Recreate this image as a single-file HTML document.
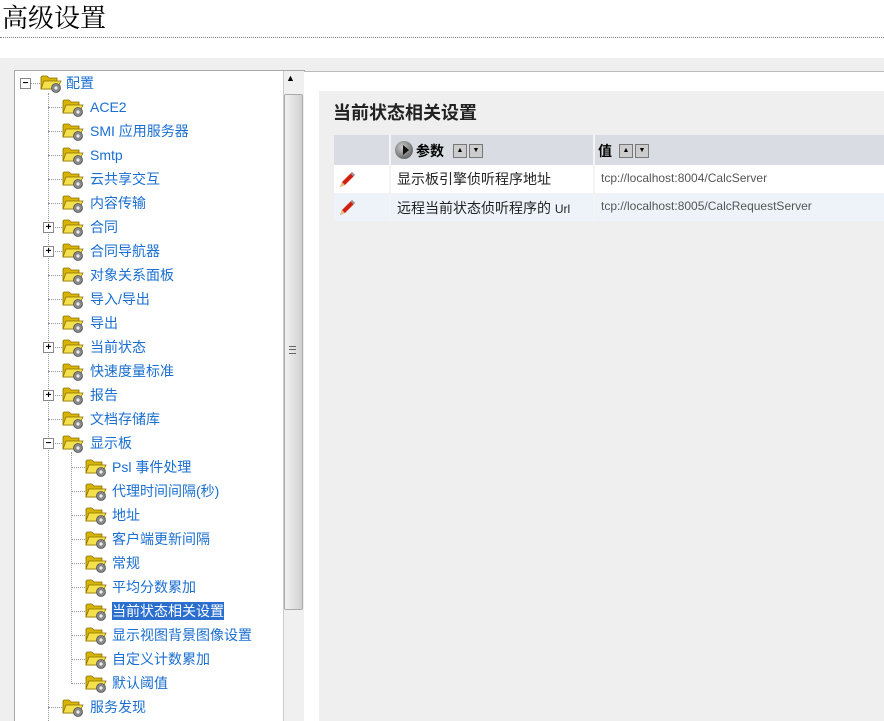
<!DOCTYPE html>
<html style="overflow:hidden;height:721px"><head><meta charset="utf-8"><style>
body{margin:0;width:884px;height:721px;overflow:hidden;background:#fff;font-family:"Liberation Sans","Noto Sans CJK SC",sans-serif;position:relative}
.a{position:absolute}
.t{position:absolute;font-size:14px;color:#1a6fd0;line-height:18px;white-space:nowrap}
.sel{background:#2a6fd0;color:#fff}
.hl{position:absolute;border-top:1px dotted #999;height:0}
.vl{position:absolute;border-left:1px dotted #999;width:0}
.box{position:absolute;width:9px;height:9px;border:1px solid #888;background:#fff;font:bold 10px/9px "Liberation Sans",sans-serif;text-align:center;color:#000}
</style></head><body>
<svg width="0" height="0" style="position:absolute"><defs>
<symbol id="f" viewBox="0 0 22 20">
<path d="M1 4 L1 16 L17 16 L17 5 L9 5 L7 3 L2 3 Z" fill="#d8b400" stroke="#8a7000" stroke-width="0.8"/>
<path d="M1 16 L4 8 L21 8 L17 16 Z" fill="#f4e04a" stroke="#8a7000" stroke-width="0.8"/>
<circle cx="16" cy="15" r="4.5" fill="#888" stroke="#555" stroke-width="0.8"/>
<circle cx="16" cy="15" r="1.6" fill="#eee"/>
</symbol></defs></svg>
<div class="a" style="left:2px;top:2px;font-size:26px;line-height:34px;color:#000;font-family:'Liberation Serif','Noto Serif CJK SC',serif">高级设置</div>
<div class="a" style="left:0;top:37px;width:884px;border-top:1px dotted #888"></div>
<div class="a" style="left:0;top:58px;width:884px;height:663px;background:#efefef"></div>
<div class="a" style="left:14px;top:70px;width:289px;height:651px;background:#fff;border:1px solid #aaa;border-bottom:none"></div>
<div class="a" style="left:283px;top:71px;width:20px;height:650px;background:#f0f0f0;border-left:1px solid #ccc"></div>
<div class="a" style="left:286px;top:73px;font-size:9px;color:#000">▲</div>
<div class="a" style="left:284px;top:94px;width:17px;height:514px;background:linear-gradient(90deg,#f2f2f2,#d0d0d0);border:1px solid #aaa;border-radius:2px"></div>
<div class="a" style="left:289px;top:346px;width:7px;height:6px;border-top:1px solid #666;border-bottom:1px solid #666"><div style="margin-top:2px;border-top:1px solid #666"></div></div>
<div class="a" style="left:304px;top:71px;width:580px;height:650px;background:#fff;border-top:1px solid #bbb"></div>
<div class="a" style="left:319px;top:91px;width:565px;height:630px;background:#efefef"></div>
<div class="a" style="left:333px;top:101px;font-size:18px;font-weight:bold;color:#222;line-height:24px">当前状态相关设置</div>
<div class="a" style="left:334px;top:135px;width:550px;height:30px;background:#d9dde3"></div>
<div class="a" style="left:334px;top:165px;width:550px;height:28px;background:#fff"></div>
<div class="a" style="left:334px;top:193px;width:550px;height:28px;background:#eef3fa"></div>
<div class="a" style="left:389px;top:135px;width:2px;height:86px;background:#f4f4f4"></div>
<div class="a" style="left:593px;top:135px;width:2px;height:86px;background:#f4f4f4"></div>
<div class="a" style="left:395px;top:141px;width:18px;height:18px;border-radius:50%;background:radial-gradient(circle at 40% 35%,#ccc,#444)"></div>
<div class="a" style="left:403px;top:145px;width:0;height:0;border-left:6px solid #111;border-top:5px solid transparent;border-bottom:5px solid transparent"></div>
<div class="a" style="left:416px;top:141px;font-size:14px;font-weight:bold;color:#000">参数</div>
<div class="a" style="left:453px;top:144px;width:12px;height:12px;background:#ccc;border:1px solid #777;font-size:7px;line-height:12px;text-align:center">▲</div>
<div class="a" style="left:469px;top:144px;width:12px;height:12px;background:#ccc;border:1px solid #777;font-size:7px;line-height:12px;text-align:center">▼</div>
<div class="a" style="left:598px;top:141px;font-size:14px;font-weight:bold;color:#000">值</div>
<div class="a" style="left:619px;top:144px;width:12px;height:12px;background:#ccc;border:1px solid #777;font-size:7px;line-height:12px;text-align:center">▲</div>
<div class="a" style="left:635px;top:144px;width:12px;height:12px;background:#ccc;border:1px solid #777;font-size:7px;line-height:12px;text-align:center">▼</div>
<svg class="a" style="left:337px;top:170px" width="20" height="20"><path d="M3 17 L5 12 L15 2 L18 5 L8 15 Z" fill="#d02010"/><path d="M3 17 L5 12 L8 15 Z" fill="#e8c080"/><path d="M15 2 L18 5 L16.5 6.5 L13.5 3.5Z" fill="#999"/></svg>
<svg class="a" style="left:337px;top:198px" width="20" height="20"><path d="M3 17 L5 12 L15 2 L18 5 L8 15 Z" fill="#d02010"/><path d="M3 17 L5 12 L8 15 Z" fill="#e8c080"/><path d="M15 2 L18 5 L16.5 6.5 L13.5 3.5Z" fill="#999"/></svg>
<div class="a" style="left:397px;top:169px;font-size:14px;color:#222">显示板引擎侦听程序地址</div>
<div class="a" style="left:397px;top:198px;font-size:14px;color:#222">远程当前状态侦听程序的 <span style="font-size:12px">Url</span></div>
<div class="a" style="left:601px;top:171px;font-size:12px;color:#555">tcp://localhost:8004/CalcServer</div>
<div class="a" style="left:601px;top:199px;font-size:12px;color:#555">tcp://localhost:8005/CalcRequestServer</div>

<div class="vl" style="left:48px;top:93px;height:628px"></div>
<div class="vl" style="left:71px;top:452px;height:230px"></div>
<div id="tree"></div>
<script>
var items=[[0,'配置','-'],[1,'ACE2'],[1,'SMI 应用服务器'],[1,'Smtp'],[1,'云共享交互'],[1,'内容传输'],[1,'合同','+'],[1,'合同导航器','+'],[1,'对象关系面板'],[1,'导入/导出'],[1,'导出'],[1,'当前状态','+'],[1,'快速度量标准'],[1,'报告','+'],[1,'文档存储库'],[1,'显示板','-'],[2,'Psl 事件处理'],[2,'代理时间间隔(秒)'],[2,'地址'],[2,'客户端更新间隔'],[2,'常规'],[2,'平均分数累加'],[2,'当前状态相关设置',0,1],[2,'显示视图背景图像设置'],[2,'自定义计数累加'],[2,'默认阈值'],[1,'服务发现']];
var h='';var ix=[40,62,85],tx=[66,90,112],lx=[25,48,71];
items.forEach(function(it,i){var c=83+24*i,L=it[0];
h+='<div class="hl" style="left:'+(lx[L]+(L==0?5:0))+'px;top:'+c+'px;width:'+(ix[L]-lx[L]-(L==0?5:0))+'px"></div>';
if(it[2])h+='<div class="box" style="left:'+(lx[L]-5)+'px;top:'+(c-5)+'px">'+(it[2]=='-'?'−':'+')+'</div>';
h+='<svg class="a" style="left:'+ix[L]+'px;top:'+(c-10)+'px" width="22" height="20"><use href="#f"/></svg>';
h+='<div class="t'+(it[3]?' sel':'')+'" style="left:'+tx[L]+'px;top:'+(c-9)+'px">'+it[1]+'</div>';});
document.getElementById('tree').innerHTML=h;
</script>
</body></html>
